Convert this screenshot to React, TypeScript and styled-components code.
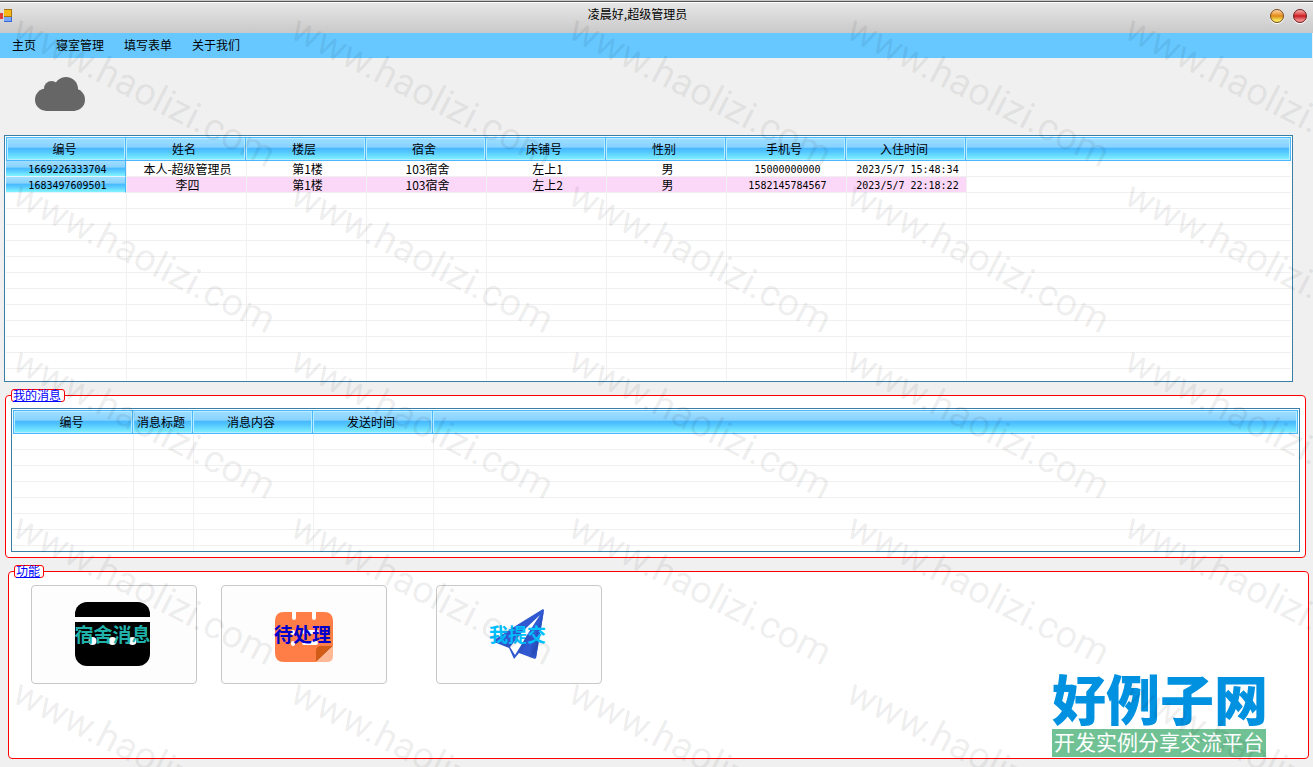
import React from "react";
import styled, { createGlobalStyle, css } from "styled-components";

const GlobalStyle = createGlobalStyle`
  * { box-sizing: border-box; }
  body {
    margin: 0;
    background: #f0f0f0;
    color: #000;
    font-family: "Noto Sans CJK SC", sans-serif;
    font-size: 12px;
    line-height: 16px;
  }
`;

const Window = styled.div`
  position: relative;
  min-height: 100vh;
  overflow: hidden;
`;

const TitleBar = styled.header`
  display: grid;
  grid-template-columns: 12px 1fr 44px;
  align-items: center;
  height: 33px;
  padding: 0 6px 2px 0;
  border-top: 1px solid #c8c8c8;
  background: linear-gradient(#555 0 1px, #fff 1px 2px, #e6e6e6 2px, #c9c9c9);
`;

const Title = styled.h1`
  margin: 0;
  padding-bottom: 4px;
  font-size: 12px;
  font-weight: 400;
  line-height: 16px;
  text-align: center;
`;

const WindowButtons = styled.div`
  display: flex;
  gap: 9px;
  justify-content: flex-end;
`;

const Orb = styled.button<{ $tone: "amber" | "red" }>`
  width: 14px;
  height: 14px;
  padding: 0;
  border: 1px solid ${(p) => (p.$tone === "amber" ? "#7a4a18" : "#6e1c1c")};
  border-radius: 50%;
  box-shadow: 0 1px 1px #fff;
  background: ${(p) =>
    p.$tone === "amber"
      ? "linear-gradient(#fbd9b0, #f0a040 35%, #dd8a18 50%, #f6e45a 85%)"
      : "linear-gradient(#f4b0b0, #e25050 35%, #c41c24 50%, #f08a8a 85%)"};
`;

const MenuBar = styled.nav`
  display: flex;
  align-items: center;
  gap: 20px;
  height: 25px;
  margin-right: 1px;
  padding: 0 0 2px 12px;
  background: #66c8ff;
`;

const MenuLink = styled.a`
  color: #000;
  text-decoration: none;
`;

const Banner = styled.div`
  height: 77px;
  padding: 19px 35px;
`;

const GridFrame = styled.div<{ $height: number }>`
  height: ${(p) => p.$height}px;
  padding: 1px;
  overflow: hidden;
  border: 1px solid #3a7fa8;
  background: #fff;
`;

const GridViewport = styled.div`
  height: 100%;
  overflow: hidden;
`;

const Table = styled.table`
  width: 100%;
  table-layout: fixed;
  border-collapse: separate;
  border-spacing: 0;
`;

const gloss = css`
  background: linear-gradient(#a0deff, #86d2ff 42%, #48b8ff 46%, #50c4ff 60%, #84f4ff) padding-box;
`;

const numerals = css`
  padding-top: 2px;
  font-family: "DejaVu Sans Mono", monospace;
  font-size: 10px;
  line-height: 13px;
`;

const HeadCell = styled.th`
  height: 24px;
  padding: 0 3px 0 0;
  border: 1px solid #4ab8ff;
  border-left-width: 0;
  box-shadow: inset 0 0 0 1px #b8ecff;
  font-weight: 400;
  line-height: 16px;
  text-align: center;
  white-space: nowrap;
  ${gloss}
  &:first-child { border-left-width: 1px; }
`;

const RowHead = styled.th`
  height: 16px;
  padding: 0 0 0 4px;
  border-right: 1px solid #4ab8ff;
  border-bottom: 1px solid #e4f4fc;
  font-weight: 400;
  ${numerals}
  ${gloss}
`;

const Cell = styled.td<{ $tinted?: boolean; $numeric?: boolean }>`
  height: 16px;
  padding: 0 0 0 2px;
  border-bottom: 1px solid #f0f0f0;
  border-left: 1px solid #f0f0f0;
  background: ${(p) => (p.$tinted ? "#fcd8f8" : "#fff")};
  line-height: 15px;
  text-align: center;
  white-space: nowrap;
  &:first-child { border-left: 0; }
  ${(p) => p.$numeric && numerals}
`;

const ResidentSection = styled.section`
  margin: 0 20px 7px 4px;
`;

const Group = styled.fieldset<{ $inset: string; $padding: string }>`
  position: relative;
  margin: ${(p) => p.$inset};
  padding: ${(p) => p.$padding};
  min-width: 0;
  border: 1px solid #f00;
  border-radius: 4px;
  background: #fff;
`;

const Legend = styled.legend`
  height: 13px;
  padding: 0 3px 0 1px;
  border: 1px solid #f00;
  border-radius: 3px;
  background: #fff;
  color: #00f;
  line-height: 10px;
  text-decoration: underline;
  text-decoration-thickness: 1px;
`;

const Actions = styled.div`
  display: flex;
  height: 173px;
  align-items: flex-start;
`;

const ActionButton = styled.button<{ $color: string; $gap: number }>`
  display: grid;
  place-items: center;
  place-content: center;
  width: 166px;
  height: 99px;
  margin-left: ${(p) => p.$gap}px;
  padding: 0 3px 1px 0;
  border: 1px solid #c8c8c8;
  border-radius: 4px;
  background: #fdfdfd;
  color: ${(p) => p.$color};
  font-family: inherit;
  font-size: 19px;
  font-weight: 700;
  line-height: 24px;
  > * { grid-area: 1 / 1; }
`;

const ActionText = styled.span`
  z-index: 1;
`;

const Logo = styled.a`
  position: absolute;
  right: 42px;
  bottom: 1px;
  width: 214px;
  color: #0092e0;
  text-align: center;
  text-decoration: none;
`;

const LogoName = styled.strong`
  display: block;
  font-size: 54px;
  font-weight: 900;
  line-height: 62px;
  white-space: nowrap;
`;

const LogoTag = styled.span`
  display: block;
  padding-bottom: 4px;
  background: #70c294;
  color: #fff;
  font-size: 21px;
  line-height: 24px;
  white-space: nowrap;
`;

const WatermarkLayer = styled.div`
  position: absolute;
  inset: 0;
  display: grid;
  grid-template-columns: repeat(5, 278px);
  grid-auto-rows: 166px;
  padding-top: 2px;
  overflow: hidden;
  pointer-events: none;
  z-index: 2;
`;

const Watermark = styled.span`
  padding-left: 9px;
  color: rgba(0, 0, 0, 0.08);
  font-family: Roboto, sans-serif;
  font-size: 38px;
  line-height: 44px;
  white-space: nowrap;
  transform: rotate(27deg);
  transform-origin: 9px 38px;
`;

function AppIcon() {
  return (
    <svg width="12" height="14" viewBox="0 0 12 14" aria-hidden="true">
      <rect x="0" y="4" width="3" height="6" fill="#e04038" />
      <rect x="4" y="0" width="8" height="8" fill="#a87810" />
      <rect x="4" y="1" width="7" height="6" fill="#f8b818" />
      <rect x="4" y="8" width="8" height="5" fill="#3a68d8" />
      <rect x="4" y="8" width="7" height="4" fill="#78a8f8" />
    </svg>
  );
}

function CloudIcon() {
  return (
    <svg width="50" height="34" viewBox="0 0 50 34" fill="#666" aria-hidden="true">
      <circle cx="31" cy="12" r="12" />
      <circle cx="16.5" cy="11.5" r="7.5" />
      <circle cx="11.2" cy="22.7" r="11.2" />
      <circle cx="38.8" cy="22.7" r="11.2" />
      <path d="M11 11H40V34H11Z" />
    </svg>
  );
}

function MessageIcon() {
  return (
    <svg width="75" height="64" viewBox="0 0 75 64" aria-hidden="true">
      <rect width="75" height="64" rx="12" />
      <rect y="15" width="75" height="5" fill="#fff" />
      <g fill="#fff">
        <circle cx="17.5" cy="39" r="4" />
        <circle cx="37.5" cy="39" r="4" />
        <circle cx="57.5" cy="39" r="4" />
      </g>
    </svg>
  );
}

function PendingIcon() {
  return (
    <svg width="61" height="56" viewBox="-3 -6 61 56" aria-hidden="true">
      <path d="M9 0H49Q58 0 58 9V34L41 50H9Q0 50 0 41V9Q0 0 9 0Z" fill="#ff7d46" />
      <path d="M58 34H46Q41 34 41 39V50Z" fill="#d05c18" />
      <path d="M58 34V44Q58 50 52 50H41Z" fill="#ffb896" />
      <path
        d="M19 -2V6M39 -2V6M18 20V21M18 31V32M29 20H42M29 31H41"
        stroke="#fff"
        strokeWidth="4"
        strokeLinecap="round"
      />
    </svg>
  );
}

function PlaneIcon() {
  return (
    <svg width="55" height="50" viewBox="0 0 55 50" aria-hidden="true">
      <path d="M53 0L54 1L46 49L45 50L29 44L24 50L19 39L4 33V31L27 16Z" fill="#3058d0" />
      <path d="M50 6L34 21L20 38L25 46L30 38L37 26Z" fill="#fff" />
      <path d="M54 1L46 49L40 42Z" fill="#2a52c6" />
    </svg>
  );
}

interface Column {
  label: string;
  width?: number;
}

interface GridProps {
  columns: Column[];
  rows: string[][];
  visibleRows: number;
  height: number;
}

const isNumeric = (text: string) => /^[\d/: ]+$/.test(text);

function DataGrid({ columns, rows, visibleRows, height }: GridProps) {
  const blanks = Array.from({ length: visibleRows - rows.length });
  return (
    <GridFrame $height={height}>
      <GridViewport>
        <Table>
          <colgroup>
            {columns.map((c) => (
              <col key={c.label} width={c.width} />
            ))}
            <col />
          </colgroup>
          <thead>
            <tr>
              {columns.map((c) => (
                <HeadCell key={c.label} scope="col">
                  {c.label}
                </HeadCell>
              ))}
              <HeadCell />
            </tr>
          </thead>
          <tbody>
            {rows.map(([id, ...values], r) => (
              <tr key={id}>
                <RowHead scope="row">{id}</RowHead>
                {values.map((v, i) => (
                  <Cell key={i} $tinted={r % 2 === 1} $numeric={isNumeric(v)}>
                    {v}
                  </Cell>
                ))}
                <Cell />
              </tr>
            ))}
            {blanks.map((_, r) => (
              <tr key={r}>
                {columns.map((c) => (
                  <Cell key={c.label} />
                ))}
                <Cell />
              </tr>
            ))}
          </tbody>
        </Table>
      </GridViewport>
    </GridFrame>
  );
}

const residentColumns: Column[] = ["编号", "姓名", "楼层", "宿舍", "床铺号", "性别", "手机号", "入住时间"].map(
  (label) => ({ label, width: 120 })
);

const residents = [
  ["1669226333704", "本人-超级管理员", "第1楼", "103宿舍", "左上1", "男", "15000000000", "2023/5/7 15:48:34"],
  ["1683497609501", "李四", "第1楼", "103宿舍", "左上2", "男", "1582145784567", "2023/5/7 22:18:22"],
];

const messageColumns: Column[] = [
  { label: "编号", width: 120 },
  { label: "消息标题", width: 60 },
  { label: "消息内容", width: 120 },
  { label: "发送时间", width: 120 },
];

const menu = ["主页", "寝室管理", "填写表单", "关于我们"];

export default function App() {
  return (
    <Window>
      <GlobalStyle />
      <TitleBar>
        <AppIcon />
        <Title>凌晨好,超级管理员</Title>
        <WindowButtons>
          <Orb $tone="amber" aria-label="最小化" />
          <Orb $tone="red" aria-label="关闭" />
        </WindowButtons>
      </TitleBar>
      <MenuBar>
        {menu.map((m) => (
          <MenuLink key={m} href="#">
            {m}
          </MenuLink>
        ))}
      </MenuBar>
      <Banner>
        <CloudIcon />
      </Banner>
      <ResidentSection>
        <DataGrid columns={residentColumns} rows={residents} visibleRows={14} height={247} />
      </ResidentSection>
      <Group $inset="0 7px 7px 5px" $padding="6px 5px 5px 5px">
        <Legend>我的消息</Legend>
        <DataGrid columns={messageColumns} rows={[]} visibleRows={8} height={144} />
      </Group>
      <Group $inset="0 4px 8px 8px" $padding="7px 5px 0 5px">
        <Legend>功能</Legend>
        <Actions>
          <ActionButton $color="#20b2aa" $gap={17}>
            <MessageIcon />
            <ActionText>宿舍消息</ActionText>
          </ActionButton>
          <ActionButton $color="#0000cd" $gap={24}>
            <PendingIcon />
            <ActionText>待处理</ActionText>
          </ActionButton>
          <ActionButton $color="#00bfff" $gap={49}>
            <PlaneIcon />
            <ActionText>我提交</ActionText>
          </ActionButton>
        </Actions>
        <Logo href="#">
          <LogoName>好例子网</LogoName>
          <LogoTag>开发实例分享交流平台</LogoTag>
        </Logo>
      </Group>
      <WatermarkLayer aria-hidden="true">
        {Array.from({ length: 25 }, (_, i) => (
          <Watermark key={i}>www.haolizi.com</Watermark>
        ))}
      </WatermarkLayer>
    </Window>
  );
}
